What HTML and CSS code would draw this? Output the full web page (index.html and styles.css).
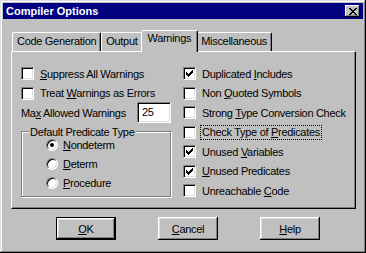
FILE: index.html
```html
<!DOCTYPE html>
<html lang="en">
<head>
    <meta charset="UTF-8">
    <meta name="viewport" content="width=device-width, initial-scale=1.0">
    <title>Compiler Options</title>
    <link rel="stylesheet" href="styles.css">
</head>
<body>
    <div class="window">
        <div class="titlebar">
            <span class="title">Compiler Options</span>
            <button class="close-btn" aria-label="Close">
                <svg width="8" height="7" viewBox="0 0 8 7" shape-rendering="crispEdges">
                    <path d="M0 0h2v1h-2z M6 0h2v1h-2z M1 1h2v1h-2z M5 1h2v1h-2z M2 2h4v1h-4z M3 3h2v1h-2z M2 4h4v1h-4z M1 5h2v1h-2z M5 5h2v1h-2z M0 6h2v1h-2z M6 6h2v1h-2z" fill="#000"/>
                </svg>
            </button>
        </div>

        <div class="dialog-body">
            <div class="tabs">
                <div class="tab">Code Generation</div>
                <div class="tab">Output</div>
                <div class="tab active">Warnings</div>
                <div class="tab">Miscellaneous</div>
            </div>

            <div class="panel">
                <div class="col col-left">
                    <div class="row"><span class="check"></span><span><u>S</u>uppress All Warnings</span></div>
                    <div class="row"><span class="check"></span><span>Treat <u>W</u>arnings as Errors</span></div>
                    <div class="row row-field"><span>Ma<u>x</u> Allowed Warnings</span><span class="field">25</span></div>

                    <fieldset class="group">
                        <legend>Default Predicate Type</legend>
                        <div class="radios">
                            <div class="radio-row"><span class="radio checked"></span><span><u>N</u>ondeterm</span></div>
                            <div class="radio-row"><span class="radio"></span><span><u>D</u>eterm</span></div>
                            <div class="radio-row"><span class="radio"></span><span><u>P</u>rocedure</span></div>
                        </div>
                    </fieldset>
                </div>

                <div class="col col-right">
                    <div class="row"><span class="check checked"></span><span>Duplicated <u>I</u>ncludes</span></div>
                    <div class="row"><span class="check"></span><span>Non <u>Q</u>uoted Symbols</span></div>
                    <div class="row"><span class="check"></span><span>Strong <u>T</u>ype Conversion Check</span></div>
                    <div class="row"><span class="check"></span><span class="focus">Check Type of <u>P</u>redicates</span></div>
                    <div class="row"><span class="check checked"></span><span>Unused <u>V</u>ariables</span></div>
                    <div class="row"><span class="check checked"></span><span><u>U</u>nused Predicates</span></div>
                    <div class="row"><span class="check"></span><span>Unreachable <u>C</u>ode</span></div>
                </div>
            </div>

            <div class="buttons">
                <button class="btn default"><u>O</u>K</button>
                <button class="btn"><u>C</u>ancel</button>
                <button class="btn"><u>H</u>elp</button>
            </div>
        </div>
    </div>
</body>
</html>
```

FILE: styles.css
```css
/* Win95 style dialog */
body {
    margin: 0;
    background: #c0c0c0;
    font-family: "Liberation Sans", Arial, sans-serif;
    font-size: 11px;
    letter-spacing: -0.3px;
    color: #000;
}

.window {
    width: 366px;
    height: 253px;
    box-sizing: border-box;
    padding: 3px;
    background: #c0c0c0;
    box-shadow: inset -1px -1px #000, inset 1px 1px #dfdfdf, inset -2px -2px #808080, inset 2px 2px #fff;
}

.titlebar {
    height: 16px;
    background: #000080;
    display: flex;
    align-items: center;
    justify-content: space-between;
    padding: 0 3px;
}

.title {
    color: #fff;
    font-weight: bold;
    letter-spacing: 0;
}

.close-btn {
    width: 15px;
    height: 12px;
    padding: 0;
    border: 0;
    background: #c0c0c0;
    box-shadow: inset -1px -1px #000, inset 1px 1px #fff, inset -2px -2px #808080;
    display: flex;
    align-items: center;
    justify-content: center;
}

.dialog-body {
    padding: 11px 7px 0 8px;
}

/* tabs */
.tabs {
    display: flex;
    align-items: flex-end;
    height: 21px;
    padding-left: 1px;
}

.tab {
    height: 19px;
    box-sizing: border-box;
    padding: 2px 4px 0;
    border: 1px solid;
    border-bottom: 0;
    border-color: #fff #000 transparent #fff;
    border-radius: 2px 2px 0 0;
    box-shadow: inset -1px 0 #808080;
    line-height: 13px;
    white-space: nowrap;
}

.tab.active {
    height: 22px;
    margin: 0 -2px -1px;
    padding: 1px 6px 0;
    position: relative;
    z-index: 1;
    background: #c0c0c0;
}

.panel {
    height: 158px;
    box-sizing: border-box;
    border: 1px solid;
    border-color: #fff #000 #000 #fff;
    box-shadow: inset -1px -1px #808080;
    padding: 12px 0 0 9px;
    display: flex;
    gap: 12px;
}

.col-left {
    width: 150px;
}

.row {
    height: 19.5px;
    display: flex;
    align-items: center;
    gap: 6px;
    white-space: nowrap;
}

.row-field {
    justify-content: space-between;
}

.check {
    width: 13px;
    height: 13px;
    box-sizing: border-box;
    flex-shrink: 0;
    background: #fff;
    border: 1px solid;
    border-color: #808080 #fff #fff #808080;
    box-shadow: inset 1px 1px #000, inset -1px -1px #dfdfdf;
}

.check.checked {
    background: #fff url("data:image/svg+xml,%3Csvg xmlns='http://www.w3.org/2000/svg' width='7' height='7' shape-rendering='crispEdges'%3E%3Cpath d='M0 2h1v3h-1z M1 3h1v3h-1z M2 4h1v3h-1z M3 3h1v3h-1z M4 2h1v3h-1z M5 1h1v3h-1z M6 0h1v3h-1z'/%3E%3C/svg%3E") no-repeat 2px 2px;
}

.field {
    width: 34px;
    height: 21px;
    box-sizing: border-box;
    background: #fff;
    border: 1px solid;
    border-color: #808080 #fff #fff #808080;
    box-shadow: inset 1px 1px #000, inset -1px -1px #dfdfdf;
    padding: 3px 0 0 4px;
    line-height: 13px;
}

.focus {
    outline: 1px dotted #000;
    padding: 0 1px;
    margin-left: -1px;
    line-height: 13px;
}

/* group box */
.group {
    margin: 3px 0 0;
    padding: 0 0 3px;
    border: 1px solid #808080;
    box-shadow: inset 1px 1px #fff, 1px 1px #fff;
    min-width: 0;
}

.group legend {
    margin-left: 7px;
    padding: 0 1px;
    line-height: 12px;
    background: #c0c0c0;
}

.radios {
    margin-top: -2px;
    padding-left: 24px;
}

.radio-row {
    height: 19px;
    display: flex;
    align-items: center;
    gap: 5px;
}

.radio {
    width: 12px;
    height: 12px;
    box-sizing: border-box;
    border-radius: 50%;
    border: 1px solid;
    border-color: #808080 #fff #fff #808080;
    box-shadow: inset 1px 1px #000, inset -1px -1px #dfdfdf;
    background: #fff;
    display: flex;
    align-items: center;
    justify-content: center;
}

.radio.checked::after {
    content: "";
    width: 4px;
    height: 4px;
    border-radius: 50%;
    background: #000;
}

/* buttons */
.buttons {
    display: flex;
    gap: 42px;
    padding-left: 45px;
    margin-top: 8px;
}

.btn {
    width: 60px;
    height: 23px;
    padding: 0;
    border: 0;
    background: #c0c0c0;
    font: inherit;
    letter-spacing: inherit;
    color: #000;
    box-shadow: inset -1px -1px #000, inset 1px 1px #fff, inset -2px -2px #808080, inset 2px 2px #dfdfdf;
}

.btn.default {
    border: 1px solid #000;
}
```
